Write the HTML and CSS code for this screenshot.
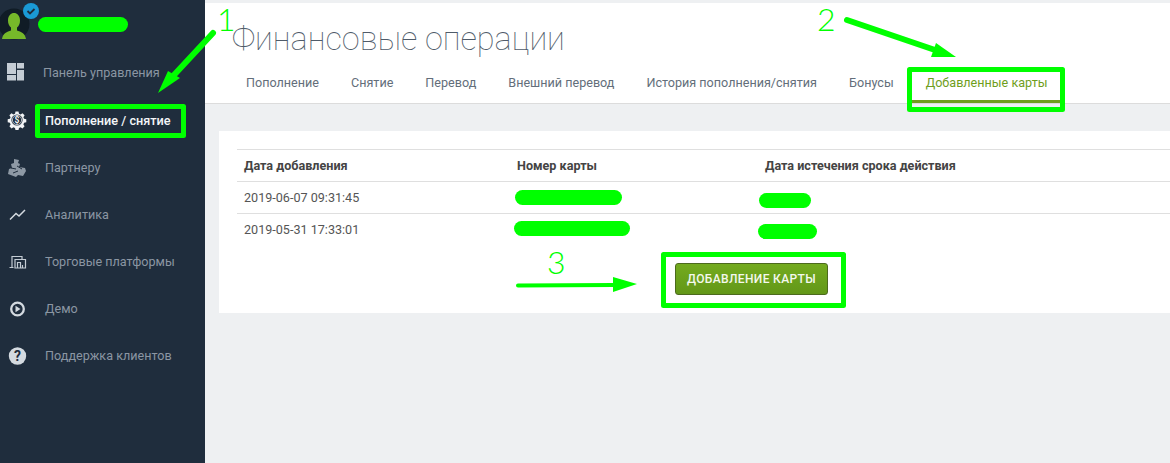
FILE: index.html
```html
<!DOCTYPE html>
<html lang="ru">
<head>
<meta charset="utf-8">
<title>Финансовые операции</title>
<link rel="stylesheet" href="styles.css">
</head>
<body>
<div class="app">
  <aside class="sidebar">
    <div class="profile">
      <svg class="avatar" width="40" height="40" viewBox="0 0 40 40">
        <circle cx="14" cy="24" r="15.500" fill="#101c26"/>
        <path d="M2 39c1-6 5-7 9-8.500v-3c-2-1.500-3-4-3-7 0-5 3-7.500 6-7.500s6 2.500 6 7.500c0 3-1 5.500-3 7v3c4 1.500 8 2.500 9 8.500z" fill="#76b82a"/>
        <circle cx="31" cy="11" r="8" fill="#1a9ad6"/>
        <path d="M27.500 11l2.500 2.500 4.500-4.500" fill="none" stroke="#1f2d3d" stroke-width="1.800"/>
      </svg>
    </div>
    <nav class="menu">
      <a class="item tall">
        <svg class="icon" width="20" height="20" viewBox="0 0 20 20"><path d="M0 1h9v11H0zM0 13h9v5.500H0zM10 1h7v5.500h-7zM10 8h7v10.500h-7z" fill="#c4ccd4"/></svg>
        <span class="first">Панель управления</span>
      </a>
      <a class="item tall active">
        <svg class="icon" width="20" height="20" viewBox="0 0 20 20"><path d="M8.500 1.500h3l.5 2.200 1.600.7 1.900-1.200 2.100 2.100-1.200 1.900.7 1.600 2.200.5v3l-2.200.5-.7 1.600 1.200 1.900-2.100 2.100-1.900-1.200-1.600.7-.5 2.200h-3l-.5-2.200-1.600-.7-1.900 1.200-2.100-2.100 1.200-1.900-.7-1.600-2.200-.5v-3l2.200-.5.7-1.600-1.200-1.900 2.100-2.100 1.900 1.200 1.600-.7z" fill="#f2f4f6"/><circle cx="10" cy="10" r="5.600" fill="#1f2d3d"/><circle cx="10" cy="10" r="4.600" fill="none" stroke="#f2f4f6" stroke-width=".7"/><text class="dollar" x="10" y="13">$</text></svg>
        <span>Пополнение / снятие</span>
      </a>
      <a class="item">
        <svg class="icon" width="20" height="20" viewBox="0 0 20 20"><path d="M7 1l5 1-1 3 2 1-1 3 6 1 1 3-3 5-5-1-2 2-8-3 1-5 3-1-1-4 3-1z" fill="#8e99a5"/><path d="M4 10l5 1M10 8l5 3M6 15l5-2" stroke="#1f2d3d" fill="none"/></svg>
        <span>Партнеру</span>
      </a>
      <a class="item">
        <svg class="icon" width="20" height="20" viewBox="0 0 20 20"><path d="M3 14.500L9 8.500l3 2.500L18 5" fill="none" stroke="#d4dae0" stroke-width="1.500"/></svg>
        <span>Аналитика</span>
      </a>
      <a class="item">
        <svg class="icon" width="20" height="20" viewBox="0 0 20 20"><path d="M2.500 15.500h4M5 15V4.500h10V7M8 7.500h10.500v8.500H8zM10.500 15.500v-5h3v5M15.500 15.500v-2.500" fill="none" stroke="#c4ccd4" stroke-width="1.200"/></svg>
        <span>Торговые платформы</span>
      </a>
      <a class="item">
        <svg class="icon" width="20" height="20" viewBox="0 0 20 20"><circle cx="10.500" cy="10" r="6.300" fill="none" stroke="#d4dae0" stroke-width="2.300"/><path d="M8.500 6.800l5 3.200-5 3.200z" fill="#d4dae0"/></svg>
        <span>Демо</span>
      </a>
      <a class="item">
        <svg class="icon" width="20" height="20" viewBox="0 0 20 20"><circle cx="10.500" cy="10" r="8.700" fill="#d4dae0"/><text class="question" x="10.500" y="15">?</text></svg>
        <span>Поддержка клиентов</span>
      </a>
    </nav>
  </aside>
  <main class="main">
    <header class="head">
      <h1 class="title">Финансовые операции</h1>
      <div class="tabs">
        <a class="tab">Пополнение</a>
        <a class="tab">Снятие</a>
        <a class="tab">Перевод</a>
        <a class="tab">Внешний перевод</a>
        <a class="tab">История пополнения/снятия</a>
        <a class="tab">Бонусы</a>
        <a class="tab selected">Добавленные карты</a>
      </div>
    </header>
    <section class="card">
      <div class="row row-head">
        <div class="c1">Дата добавления</div>
        <div class="c2">Номер карты</div>
        <div class="c3">Дата истечения срока действия</div>
      </div>
      <div class="row">
        <div class="c1">2019-06-07 09:31:45</div>
        <div class="c2"></div>
        <div class="c3"></div>
      </div>
      <div class="row">
        <div class="c1">2019-05-31 17:33:01</div>
        <div class="c2"></div>
        <div class="c3"></div>
      </div>
      <div class="actions"><button class="btn">ДОБАВЛЕНИЕ КАРТЫ</button></div>
    </section>
  </main>
</div>
<svg class="overlay" width="1170" height="463" viewBox="0 0 1170 463">
  <g class="blobs">
    <rect x="38" y="17" width="90" height="15" rx="7.500"/>
    <rect x="515" y="190" width="107" height="15" rx="7.500"/>
    <rect x="759" y="193" width="52" height="15" rx="7.500"/>
    <rect x="514" y="221" width="116" height="15" rx="7.500"/>
    <rect x="758" y="224" width="59" height="15" rx="7.500"/>
    <path d="M158 93l10-22 12 7z"/>
    <path d="M956 57l-20-14-5 14z"/>
    <path d="M637 284l-24-7v15z"/>
  </g>
  <g class="shafts">
    <path d="M213 33L174 75"/>
    <path d="M847 20L935 50"/>
    <path class="thin" d="M518 285.500L614 285"/>
  </g>
  <g class="boxes">
    <rect x="37.500" y="106.500" width="146" height="29"/>
    <rect x="909.500" y="69.500" width="153" height="40"/>
    <rect x="663.500" y="254.500" width="180" height="51"/>
  </g>
  <text class="num" x="217" y="31">1</text>
  <text class="num" x="817" y="31">2</text>
  <text class="num" x="547" y="274">3</text>
</svg>
</body>
</html>
```

FILE: styles.css
```css
* { box-sizing: border-box; }
html, body { margin: 0; height: 463px; overflow: hidden; }
body { font-family: Roboto, sans-serif; background: #eef0f2; position: relative; }
.app { display: flex; height: 463px; }
.sidebar { width: 205px; flex: none; background: #1f2d3d; }
.profile { height: 48px; }
.avatar { display: block; }
.menu { display: flex; flex-direction: column; }
.item { display: flex; align-items: center; height: 47px; padding-left: 7px; gap: 18px; color: #8b96a3; font-size: 12.600px; }
.item.tall { height: 48px; }
.first { margin-left: -2px; }
.item.active { color: #f4f6f8; font-weight: 500; font-size: 12.700px; }
.icon { flex: none; }
.dollar { font: 700 8.500px Roboto, sans-serif; fill: #f2f4f6; text-anchor: middle; }
.question { font: 700 14px Roboto, sans-serif; fill: #1f2d3d; text-anchor: middle; }
.main { flex: 1; min-width: 0; padding-top: 3px; }
.head { height: 101px; background: #fff; border-bottom: 1px solid #dcdcdc; padding: 0 0 0 27px; display: flex; flex-direction: column; }
.title { margin: 16px 0 0; font-size: 32.400px; font-weight: 100; line-height: 40px; color: #4f5b69; }
.tabs { display: flex; margin: 11px 0 0 -2px; }
.tab { height: 33px; padding: 4px 16px 0; font-size: 12.600px; line-height: 18px; color: #636e7a; }
.tab.selected { color: #6f9e1c; border-bottom: 3px solid #6f9e1c; }
.card { background: #fff; margin: 27px 0 0 14px; height: 182px; padding: 18px 0 0 18px; font-size: 12.600px; color: #555; }
.row { display: flex; height: 32px; border-top: 1px solid #dfdfdf; align-items: center; line-height: 18px; }
.row-head { font-weight: 700; font-size: 12.600px; color: #444; }
.c1 { width: 280px; padding-left: 7px; flex: none; }
.c2 { width: 248px; flex: none; }
.c3 { flex: 1; }
.actions { display: flex; padding: 18px 0 0 438px; }
.btn { width: 153px; height: 32px; border: 1px solid #4c6a1d; border-radius: 3px; background: linear-gradient(#74ab1f, #629718); color: #f4f8ee; font: 500 12px Roboto, sans-serif; letter-spacing: .35px; padding: 0; }
.overlay { position: absolute; left: 0; top: 0; pointer-events: none; }
.blobs { fill: #00ff00; }
.shafts { fill: none; stroke: #00ff00; stroke-width: 6; stroke-linecap: round; }
.shafts .thin { stroke-width: 4; }
.boxes { fill: none; stroke: #00ff00; stroke-width: 5; stroke-linejoin: round; }
.num { font: 300 32px Lato, sans-serif; fill: #00ff00; }
```
